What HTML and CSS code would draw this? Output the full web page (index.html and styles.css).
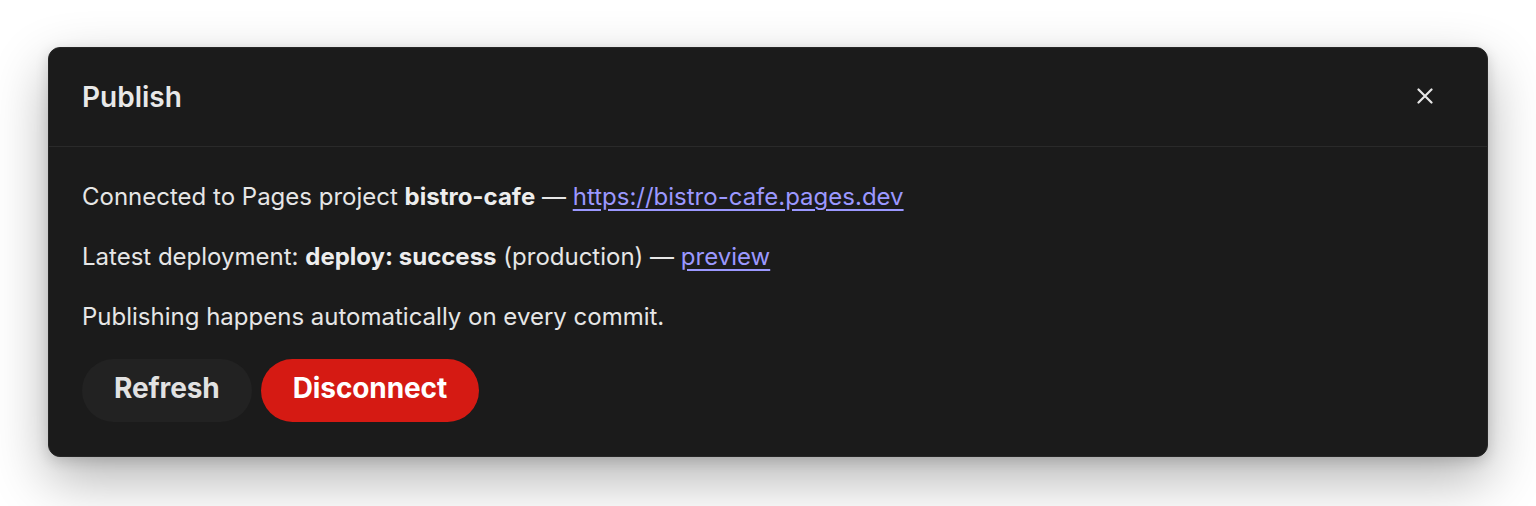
FILE: index.html
```html
<!DOCTYPE html>
<html>
<head>
<meta charset="utf-8">
<link rel="stylesheet" href="styles.css">
</head>
<body>
<div class="overlay">
  <div class="dialog">
    <div class="dialog-header">
      <h2 class="title">Publish</h2>
      <button class="close" aria-label="Close">
        <svg width="16" height="16" viewBox="0 0 16 16"><path d="M1.5 1.5 L14.5 14.5 M14.5 1.5 L1.5 14.5" stroke="#e6e6e6" stroke-width="2.2" stroke-linecap="round"/></svg>
      </button>
    </div>
    <div class="dialog-body">
      <p class="line">Connected to Pages project <strong>bistro-cafe</strong> — <a href="#">https://bistro-cafe.pages.dev</a></p>
      <p class="line">Latest deployment: <strong>deploy: success</strong> (production) — <a href="#">preview</a></p>
      <p class="line">Publishing happens automatically on every commit.</p>
      <div class="actions">
        <button class="btn btn-secondary">Refresh</button>
        <button class="btn btn-danger">Disconnect</button>
      </div>
    </div>
  </div>
</div>
</body>
</html>
```
FILE: styles.css
```css
* { box-sizing: border-box; }
html, body { margin: 0; padding: 0; }
body {
  background: #ffffff;
  font-family: Inter, "Noto Sans", sans-serif;
  width: 1536px;
  height: 506px;
  overflow: hidden;
}
.overlay {
  padding: 47px 48px;
}
.dialog {
  width: 1440px;
  height: 410px;
  background: #1b1b1b;
  border-radius: 12px;
  border: 1px solid #262626;
  box-shadow: 0 22px 55px rgba(0,0,0,0.30), 0 4px 14px rgba(0,0,0,0.14);
  color: #e8e8e8;
  display: flex;
  flex-direction: column;
}
.dialog-header {
  height: 99px;
  display: flex;
  align-items: center;
  justify-content: space-between;
  padding: 0 33px 0 33px;
  border-bottom: 1px solid #2a2a2a;
}
.title {
  margin: 0;
  font-size: 28px;
  font-weight: 600;
  color: #e8e8e8;
}
.close {
  background: none;
  border: none;
  padding: 0;
  width: 24px;
  height: 24px;
  display: flex;
  align-items: center;
  justify-content: center;
  margin-right: 17px;
  margin-top: -2px;
}
.dialog-body {
  padding: 32px 33px 33px 33px;
}
.line {
  margin: 0 0 24px 0;
  font-size: 24px;
  line-height: 36px;
  color: #e6e6e6;
}
.line strong { font-weight: 700; color: #ededed; }
.line a { color: #9b98ff; text-decoration: underline; text-underline-offset: 4px; }
.actions {
  display: flex;
  gap: 9px;
}
.btn {
  height: 63px;
  border-radius: 32px;
  border: none;
  padding: 0 32px 5px;
  font-family: inherit;
  font-size: 28px;
  font-weight: 700;
  letter-spacing: -0.1px;
}
.btn-secondary {
  background: #222222;
  color: #e2e2e2;
}
.btn-danger {
  background: #d51a13;
  color: #ffffff;
}
```
